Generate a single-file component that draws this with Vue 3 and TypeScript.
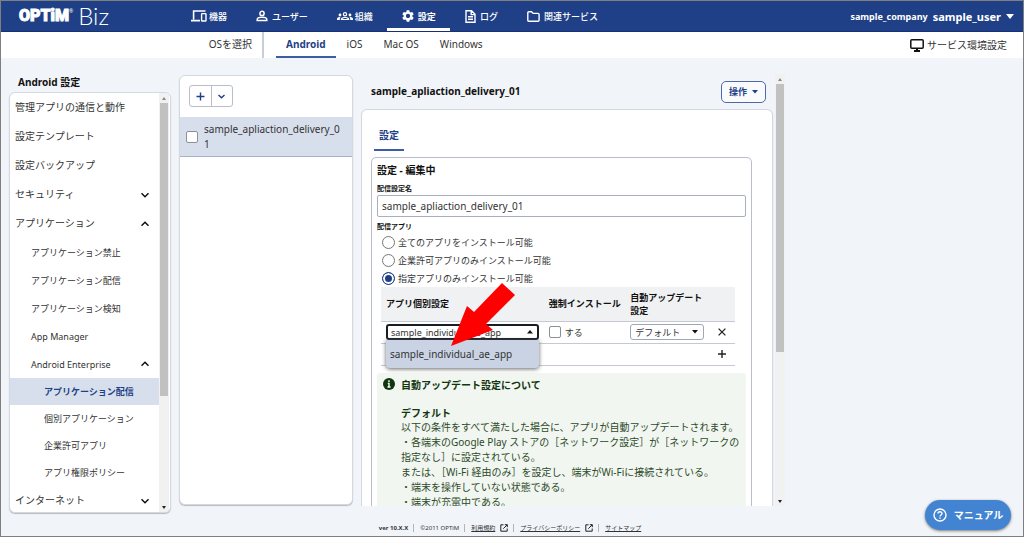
<script setup lang="ts">
import { ref } from 'vue'

interface MenuItem {
  label: string
  level: 1 | 2 | 3
  open?: boolean
  active?: boolean
}

const menu: MenuItem[] = [
  { label: '管理アプリの通信と動作', level: 1 },
  { label: '設定テンプレート', level: 1 },
  { label: '設定バックアップ', level: 1 },
  { label: 'セキュリティ', level: 1, open: false },
  { label: 'アプリケーション', level: 1, open: true },
  { label: 'アプリケーション禁止', level: 2 },
  { label: 'アプリケーション配信', level: 2 },
  { label: 'アプリケーション検知', level: 2 },
  { label: 'App Manager', level: 2 },
  { label: 'Android Enterprise', level: 2, open: true },
  { label: 'アプリケーション配信', level: 3, active: true },
  { label: '個別アプリケーション', level: 3 },
  { label: '企業許可アプリ', level: 3 },
  { label: 'アプリ権限ポリシー', level: 3 },
  { label: 'インターネット', level: 1, open: false },
]

const systems = ['Android', 'iOS', 'Mac OS', 'Windows']
const scopes = [
  '全てのアプリをインストール可能',
  '企業許可アプリのみインストール可能',
  '指定アプリのみインストール可能',
]

const name = ref('sample_apliaction_delivery_01')
const scope = ref(2)
const checked = ref(false)
const forced = ref(false)
</script>

<template>
  <div class="app">
    <header class="top">
      <a href="#" class="logo"><span class="brand">OPTiM</span><sup class="reg">®</sup><span class="biz">Biz</span></a>
      <nav class="nav">
        <a href="#">
          <svg width="16" height="12" viewBox="0 0 16 12" fill="none" stroke="currentColor" stroke-width="1.6"><path d="M14.5 1H2.6v8.6M0 10.6h9" /><rect x="10.6" y="3.6" width="4.4" height="7.4" rx=".6" stroke-width="1.4" /></svg>
          <span>機器</span>
        </a>
        <a href="#" class="spaced">
          <svg width="12" height="12" viewBox="0 0 12 12" fill="none" stroke="currentColor" stroke-width="1.5"><circle cx="6" cy="3.4" r="2.1" /><path d="M1.2 10.6V9.4C1.2 7.8 4.4 7.2 6 7.2s4.8.6 4.8 2.2v1.2z" /></svg>
          <span>ユーザー</span>
        </a>
        <a href="#">
          <svg width="16" height="12" viewBox="0 0 16 12" fill="currentColor"><circle cx="3" cy="5" r="1.4" /><circle cx="13" cy="5" r="1.4" /><path fill-rule="evenodd" d="M8 2a2.2 2.2 0 1 1 0 4.4A2.2 2.2 0 0 1 8 2zm0 1.2a1 1 0 1 0 0 2 1 1 0 0 0 0-2z" /><path fill-rule="evenodd" d="M3.8 10V9c0-1.4 2.8-2 4.2-2s4.2.6 4.2 2v1zm1.5-1.1h5.4c-.5-.5-1.9-.8-2.7-.8s-2.2.3-2.7.8z" /><path d="M0 10V8.800C0 7.700 1.800 7 3.600 7.100 2.900 7.700 2.800 8.400 2.800 10zM16 10V8.800c0-1.100-1.800-1.800-3.600-1.700.7.6.8 1.300.8 2.900z" /></svg>
          <span>組織</span>
        </a>
        <a href="#" class="spaced current">
          <svg width="12" height="12" viewBox="2 2 20 20" fill="currentColor"><path d="M19.140 12.940c.04-.3.06-.61.06-.94 0-.32-.02-.64-.07-.94l2.030-1.580a.49.49 0 0 0 .12-.61l-1.920-3.320a.49.49 0 0 0-.59-.22l-2.390.96c-.5-.38-1.030-.7-1.620-.94l-.36-2.540a.48.48 0 0 0-.48-.41h-3.840c-.24 0-.43.17-.47.41l-.36 2.540c-.59.24-1.130.57-1.620.94l-2.390-.96a.48.48 0 0 0-.59.22L2.740 8.870c-.12.21-.08.47.12.61l2.030 1.580c-.05.3-.09.63-.09.94s.02.64.07.94l-2.030 1.580a.49.49 0 0 0-.12.61l1.920 3.320c.12.22.37.29.59.22l2.390-.96c.5.38 1.030.7 1.620.94l.36 2.540c.05.24.24.41.48.41h3.840c.24 0 .44-.17.47-.41l.36-2.540c.59-.24 1.130-.56 1.620-.94l2.390.96c.22.08.47 0 .59-.22l1.920-3.320a.48.48 0 0 0-.12-.61zM12 15.600a3.600 3.600 0 1 1 0-7.200 3.600 3.600 0 0 1 0 7.200z" /></svg>
          <span>設定</span>
        </a>
        <a href="#" class="spaced">
          <svg width="11" height="13" viewBox="0 0 11 13" fill="none" stroke="currentColor" stroke-width="1.4"><path d="M1 .8h5.600L10 4.200v8H1zM3 6.800h5M3 9.300h5M6.200 1v3.600h3.600" /></svg>
          <span>ログ</span>
        </a>
        <a href="#" class="spaced">
          <svg width="13" height="11" viewBox="0 0 13 11" fill="none" stroke="currentColor" stroke-width="1.4"><path d="M.8 9.200V1.800q0-1 1-1h2.800l1.500 1.600h5q1 0 1 1v5.800q0 1-1 1H1.800q-1 0-1-1z" /></svg>
          <span>関連サービス</span>
        </a>
      </nav>
      <button type="button" class="account">
        <span>sample_company</span><span class="user">sample_user</span>
        <svg width="8" height="5" viewBox="0 0 8 5" fill="currentColor"><path d="M0 0h8L4 5z" /></svg>
      </button>
    </header>

    <div class="sub">
      <span class="pick">OSを選択</span>
      <nav class="systems">
        <a v-for="(s, i) in systems" :key="s" href="#" :class="{ on: i === 0 }">{{ s }}</a>
      </nav>
      <a href="#" class="env">
        <svg width="14" height="13" viewBox="0 0 14 13" fill="none" stroke="#111" stroke-width="1.5"><rect x=".8" y=".8" width="12.4" height="8.4" rx="1" /><path d="M4 12h6M7 9v3" stroke-width="2" /></svg>
        サービス環境設定
      </a>
    </div>

    <main class="main">
      <aside class="side">
        <h2>Android 設定</h2>
        <div class="side-box">
          <ul>
            <li v-for="(m, i) in menu" :key="i" :class="['l' + m.level, { active: m.active }]">
              <a href="#">{{ m.label }}</a>
              <svg v-if="m.open !== undefined" width="8" height="6" viewBox="0 0 8 6" fill="none" stroke="#111" stroke-width="1.5"><path :d="m.open ? 'M.5 4.8L4 1.3l3.5 3.5' : 'M.5 1.2L4 4.7l3.5-3.5'" /></svg>
            </li>
          </ul>
          <div class="bar side-bar"><i class="up"></i><b></b><i class="down"></i></div>
        </div>
      </aside>

      <section class="list">
        <div class="group">
          <button type="button" aria-label="追加"><svg width="9" height="9" viewBox="0 0 9 9" stroke="#1f3f86" stroke-width="1.4"><path d="M4.5.5v8M.5 4.5h8" /></svg></button>
          <button type="button" aria-label="メニュー"><svg width="7" height="5" viewBox="0 0 7 5" fill="none" stroke="#1f3f86" stroke-width="1.4"><path d="M.5 1l3 2.800 3-2.800" /></svg></button>
        </div>
        <label class="entry">
          <input v-model="checked" type="checkbox" class="check" />
          <span>sample_apliaction_delivery_01</span>
        </label>
      </section>

      <section class="detail">
        <div class="pane">
          <div class="head">
            <h1>sample_apliaction_delivery_01</h1>
            <button type="button" class="action">操作 <svg width="6" height="4" viewBox="0 0 6 4" fill="currentColor"><path d="M0 0h6L3 3.500z" /></svg></button>
          </div>
          <div class="card">
            <a href="#" class="tab">設定</a>
            <form class="form" @submit.prevent>
              <h3>設定 - 編集中</h3>
              <label class="cap" for="name">配信設定名</label>
              <input id="name" v-model="name" type="text" class="text" />
              <fieldset>
                <legend class="cap">配信アプリ</legend>
                <label v-for="(s, i) in scopes" :key="s" class="opt"><input v-model="scope" type="radio" name="scope" :value="i" />{{ s }}</label>
              </fieldset>
              <table>
                <colgroup><col class="c1" /><col class="c2" /><col class="c3" /><col class="c4" /></colgroup>
                <thead>
                  <tr><th>アプリ個別設定</th><th>強制インストール</th><th>自動アップデート<br />設定</th><th></th></tr>
                </thead>
                <tbody>
                  <tr>
                    <td>
                      <div class="pick-app">
                        <select class="sel focus" aria-label="アプリ個別設定"><option>sample_individual_ae_app</option></select>
                        <svg class="caret" width="6" height="4" viewBox="0 0 6 4" fill="#111"><path d="M0 3.500h6L3 0z" /></svg>
                        <ul class="drop" role="listbox"><li role="option" aria-selected="true">sample_individual_ae_app</li></ul>
                        <svg class="pointer" width="64" height="64" viewBox="0 0 64 64" fill="#f00"><path d="M0 64L16 24l7 6L51 1l13 12-29 29 7 6z" /></svg>
                      </div>
                    </td>
                    <td><label class="force"><input v-model="forced" type="checkbox" class="check" />する</label></td>
                    <td>
                      <div class="mode">
                        <select class="sel" aria-label="自動アップデート設定"><option>デフォルト</option></select>
                        <svg class="caret" width="6" height="4" viewBox="0 0 6 4" fill="#111"><path d="M0 0h6L3 3.500z" /></svg>
                      </div>
                    </td>
                    <td><button type="button" class="icon" aria-label="削除"><svg width="8" height="8" viewBox="0 0 8 8" stroke="#222" stroke-width="1.3"><path d="M.6.6l6.800 6.800M7.400.6L.6 7.400" /></svg></button></td>
                  </tr>
                  <tr>
                    <td colspan="3"></td>
                    <td><button type="button" class="icon" aria-label="行を追加"><svg width="8" height="8" viewBox="0 0 8 8" stroke="#222" stroke-width="1.4"><path d="M4 0v8M0 4h8" /></svg></button></td>
                  </tr>
                </tbody>
              </table>
              <div class="info">
                <svg width="12" height="12" viewBox="0 0 12 12"><circle cx="6" cy="6" r="6" fill="#12350f" /><path d="M6 2.200v1.700M4.800 5.400H6v3.400M4.500 9h3" fill="none" stroke="#fff" stroke-width="1.4" /></svg>
                <div>
                  <h4>自動アップデート設定について</h4>
                  <h4>デフォルト</h4>
                  <p>
                    以下の条件をすべて満たした場合に、アプリが自動アップデートされます。<br />
                    ・各端末のGoogle Play ストアの［ネットワーク設定］が［ネットワークの<br />指定なし］に設定されている。<br />
                    または、［Wi-Fi 経由のみ］を設定し、端末がWi-Fiに接続されている。<br />
                    ・端末を操作していない状態である。<br />
                    ・端末が充電中である。
                  </p>
                </div>
              </div>
            </form>
          </div>
        </div>
        <div class="bar"><i class="up"></i><b></b><i class="down"></i></div>
      </section>
    </main>

    <footer class="foot">
      <strong>ver 10.X.X</strong>
      <span>©2011 OPTiM</span>
      <span><a href="#">利用規約</a><svg width="8" height="8" viewBox="0 0 8 8" fill="none" stroke="#222"><path d="M3.500.800H.8v6.400h6.400V4.500M4.800.7h2.500v2.500M7.200.8L3.300 4.700" /></svg></span>
      <span><a href="#">プライバシーポリシー</a><svg width="8" height="8" viewBox="0 0 8 8" fill="none" stroke="#222"><path d="M3.500.800H.8v6.400h6.400V4.500M4.800.7h2.500v2.500M7.200.8L3.300 4.700" /></svg></span>
      <span><a href="#">サイトマップ</a></span>
    </footer>

    <button type="button" class="manual">
      <svg width="14" height="14" viewBox="0 0 14 14" fill="none" stroke="#fff" stroke-width="1.4"><circle cx="7" cy="7" r="6" /><path d="M5 5.600C5 3.200 9 3.200 9 5.500 9 7 7 6.900 7 8.400M7 9.400v1.400" /></svg>
      マニュアル
    </button>
  </div>
</template>

<style>
body {
  margin: 0;
}
</style>

<style scoped>
* {
  box-sizing: border-box;
}
.app {
  position: relative;
  display: flex;
  flex-direction: column;
  height: 100vh;
  overflow: hidden;
  border: 1px solid #7f7f7f;
  background: #f1f5f9;
  color: #333;
  font: 10px/15px "Noto Sans", "Noto Sans CJK JP", sans-serif;
}
h1, h2, h3, h4, p, ul, fieldset {
  margin: 0;
  padding: 0;
  border: 0;
  list-style: none;
  font-size: 10px;
}
a {
  color: inherit;
  text-decoration: none;
}
button, input, select {
  margin: 0;
  font: inherit;
  color: inherit;
}
button {
  padding: 0;
  border: 0;
  background: none;
}
svg {
  flex: none;
}

.top {
  flex: none;
  display: flex;
  height: 31px;
  padding: 0 9px 0 18px;
  background: #1f3f86;
  border-bottom: 1px solid #162f78;
  color: #fff;
}
.logo {
  display: flex;
  align-items: center;
  width: 157px;
  line-height: 30px;
}
.brand {
  font: 900 16px/30px Roboto, sans-serif;
  -webkit-text-stroke: 1px #fff;
}
.reg {
  align-self: flex-start;
  font-size: 5px;
  line-height: 20px;
}
.biz {
  padding-left: 5px;
  font: 300 24px/28px Lato, sans-serif;
}
.nav {
  display: flex;
  font-size: 9px;
  font-weight: 500;
}
.nav a {
  display: flex;
  align-items: center;
  gap: 2px;
  padding: 0 14px 0 15px;
}
.nav .spaced {
  gap: 4px;
}
.nav .current {
  box-shadow: inset 0 -3px #fff;
  font-weight: 700;
}
.account {
  display: flex;
  align-items: center;
  gap: 5px;
  margin-left: auto;
  font-size: 9px;
  font-weight: 700;
}
.account .user {
  font-size: 11px;
}

.sub {
  flex: none;
  display: flex;
  align-items: stretch;
  height: 26px;
  padding-right: 16px;
  background: #fff;
  line-height: 25px;
}
.pick {
  width: 263px;
  padding-right: 10px;
  border-right: 2px solid #c9cdd6;
  text-align: right;
}
.systems {
  display: flex;
  gap: 1px;
  padding-left: 12px;
}
.systems a {
  padding: 0 10px;
}
.systems .on {
  color: #1f3f86;
  font-weight: 700;
  box-shadow: inset 0 -2px #3c5ca4;
}
.env {
  display: flex;
  align-items: center;
  gap: 3px;
  margin-left: auto;
}

.main {
  flex: 1;
  min-height: 0;
  display: grid;
  grid-template-columns: 162fr 174fr 424fr 230fr;
  grid-template-rows: minmax(0, 1fr);
  gap: 8px;
  padding-left: 8px;
}
.side {
  display: flex;
  flex-direction: column;
  min-height: 0;
  padding-top: 15px;
}
.side h2 {
  padding: 0 0 1px 9px;
  line-height: 18px;
  color: #111;
}
.side-box, .list, .card {
  background: #fff;
  border: 1px solid #d3d9e0;
  border-radius: 6px;
  box-shadow: 0 1px 1px #b5bac2;
}
.side-box {
  flex: 1;
  display: flex;
  min-height: 0;
  overflow: hidden;
  padding-right: 1px;
}
.side-box ul {
  flex: 1;
}
.side-box li {
  display: flex;
  align-items: center;
  justify-content: space-between;
  padding-right: 10px;
}
.l1 {
  height: 29px;
  padding-left: 5px;
}
.l2 {
  height: 28px;
  padding-left: 21px;
  font-size: 9px;
}
.l3 {
  height: 27px;
  padding-left: 34px;
  font-size: 9px;
}
.active {
  background: #d8dfec;
  color: #1f3f86;
  font-weight: 700;
}

.bar {
  flex: none;
  display: flex;
  flex-direction: column;
  align-items: center;
  width: 10px;
  background: #f1f1f1;
}
.bar b {
  flex: none;
  width: 8px;
  height: 62%;
  background: #c1c1c1;
}
.side-bar b {
  height: 70%;
}
.bar i {
  flex: none;
  width: 10px;
  height: 10px;
}
.bar i::before {
  content: "";
  display: block;
  margin: 4px auto 0;
  width: 0;
  border: 2px solid transparent;
  border-top-width: 0;
  border-bottom: 3px solid #888;
}
.bar .down {
  margin-top: auto;
}
.bar .down::before {
  border-top: 3px solid #222;
  border-bottom-width: 0;
}

.list {
  margin: 17px 0 8px;
}
.group {
  display: flex;
  width: 44px;
  height: 22px;
  margin: 9px 0 10px 9px;
  border: 1px solid #b9bec9;
  border-radius: 3px;
}
.group button {
  flex: 1;
  display: flex;
  align-items: center;
  justify-content: center;
}
.group button + button {
  border-left: 1px solid #b9bec9;
}
.entry {
  display: flex;
  align-items: center;
  gap: 6px;
  height: 40px;
  padding: 0 8px 0 6px;
  background: #d8dfec;
  border-bottom: 1px solid #aab3c6;
  word-break: break-all;
}
.check {
  flex: none;
  appearance: none;
  width: 12px;
  height: 12px;
  background: #fff;
  border: 1px solid #8c8f96;
  border-radius: 2px;
}

.detail {
  display: flex;
  min-height: 0;
  margin: 16px 0 7px;
}
.pane {
  flex: 1;
  min-width: 0;
  overflow: hidden;
  padding-right: 2px;
}
.head {
  display: flex;
  align-items: center;
  justify-content: space-between;
  height: 35px;
  padding: 0 7px 0 10px;
}
h1 {
  color: #111;
}
.action {
  display: flex;
  align-items: center;
  justify-content: center;
  gap: 5px;
  width: 45px;
  height: 22px;
  border: 1px solid #4d69ab;
  border-radius: 5px;
  background: #f8fafc;
  color: #1f3f86;
  font-size: 9px;
  font-weight: 700;
}
.card {
  padding: 16px 20px 40px 9px;
}
.tab {
  display: block;
  width: 30px;
  height: 25px;
  margin-left: 3px;
  line-height: 18px;
  text-align: center;
  color: #1f3f86;
  font-weight: 700;
  border-bottom: 2px solid #3c5ca4;
}
.form {
  margin-top: 6px;
  padding: 4px 5px 20px;
  border: 1px solid #b9bec9;
  border-radius: 5px;
}
h3 {
  line-height: 17px;
  color: #111;
}
.cap {
  display: block;
  padding: 4px 0 0;
  font-size: 7px;
  font-weight: 700;
  line-height: 12px;
  color: #111;
}
.text {
  display: block;
  width: 100%;
  height: 22px;
  padding: 0 4px;
  border: 1px solid #a9afbc;
  border-radius: 2px;
  background: #fff;
}
.opt {
  display: flex;
  align-items: center;
  gap: 3px;
  height: 18px;
  padding-left: 5px;
  font-size: 9px;
}
.opt input {
  appearance: none;
  width: 13px;
  height: 13px;
  border: 1px solid #777;
  border-radius: 50%;
}
.opt input:checked {
  border-color: #1f3f86;
  background: #1f3f86;
  box-shadow: inset 0 0 0 2px #fff;
}
table {
  table-layout: fixed;
  width: calc(100% - 15px);
  margin-left: 4px;
  border-collapse: collapse;
  font-size: 9px;
}
.c1 {
  width: 46%;
}
.c2 {
  width: 23%;
}
.c4 {
  width: 8%;
}
th {
  height: 34px;
  padding: 0 0 0 5px;
  background: #f0f1f3;
  text-align: left;
  line-height: 13px;
  color: #111;
  white-space: nowrap;
}
td {
  height: 22px;
  padding: 0 5px;
}
tr {
  border-bottom: 1px solid #c6c9d3;
}
.pick-app, .mode {
  position: relative;
  height: 16px;
}
.mode {
  width: 74px;
}
.sel {
  display: block;
  appearance: none;
  width: 100%;
  height: 16px;
  padding: 0 4px;
  border: 1px solid #9fa6b4;
  border-radius: 3px;
  background: #fff;
  line-height: 13px;
}
.focus {
  border: 2px solid #1a1d24;
  padding: 0 3px;
}
.caret {
  position: absolute;
  top: 6px;
  right: 6px;
}
.drop {
  position: absolute;
  z-index: 1;
  top: 16px;
  left: 0;
  right: 0;
  background: #cad3e4;
  border-radius: 0 0 4px 4px;
  box-shadow: 0 1px 4px #666;
}
.drop li {
  padding: 0 4px;
  line-height: 28px;
}
.pointer {
  position: absolute;
  z-index: 2;
  left: 65px;
  top: -42px;
}
.force {
  display: flex;
  align-items: center;
  gap: 4px;
}
.icon {
  display: flex;
  align-items: center;
  justify-content: center;
  width: 20px;
  height: 18px;
}
.info {
  display: flex;
  gap: 6px;
  margin-top: 7px;
  padding: 5px 0 10px 6px;
  border-radius: 3px;
  background: #f1f6f0;
  color: #2d4a2a;
  white-space: nowrap;
}
.info h4 {
  margin-bottom: 14px;
  line-height: 14px;
  color: #12350f;
}
.info h4 + h4 {
  margin-bottom: 0;
}

.foot {
  flex: none;
  display: flex;
  align-items: center;
  justify-content: center;
  height: 23px;
  padding: 7px 4px 0 0;
  font-size: 6px;
  line-height: 8px;
  color: #333;
}
.foot span {
  display: flex;
  align-items: center;
  gap: 5px;
  margin-left: 5px;
  padding-left: 6px;
  border-left: 1px solid #b0b4bb;
}
.foot a {
  text-decoration: underline;
}
.manual {
  position: absolute;
  right: 12px;
  bottom: 6px;
  display: flex;
  align-items: center;
  justify-content: center;
  gap: 7px;
  width: 86px;
  height: 30px;
  border-radius: 15px;
  background: #4284d2;
  box-shadow: 0 1px 3px #777;
  color: #fff;
  font-weight: 700;
}
</style>
